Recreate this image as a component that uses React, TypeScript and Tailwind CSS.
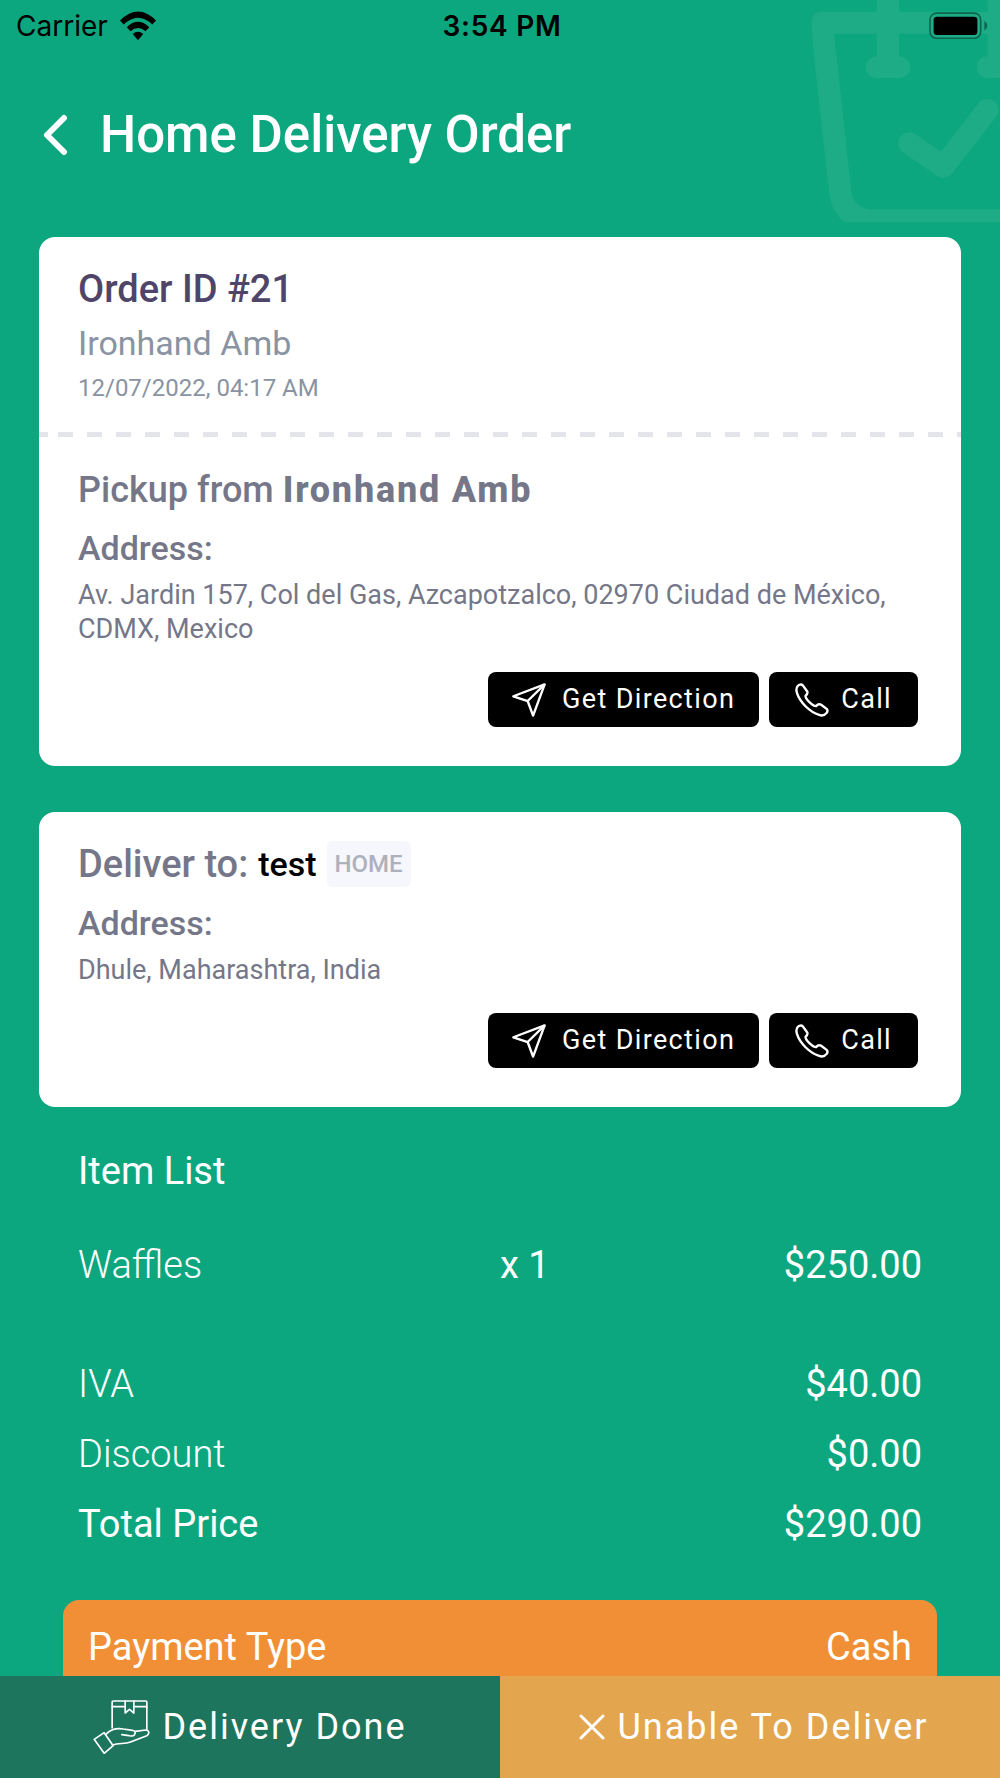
import { useState } from "react";

type Stop = {
  address: string;
};

const charges = [
  { label: "IVA", amount: "$40.00", strong: false },
  { label: "Discount", amount: "$0.00", strong: false },
  { label: "Total Price", amount: "$290.00", strong: true },
];

function WifiIcon() {
  return (
    <svg viewBox="0 0 96 80" className="h-[30px] w-9" aria-hidden="true">
      <path d="M0 25Q48-23 96 25L86 36Q48 0 10 36Z" />
      <path d="M18 43Q48 14 78 43L68 54Q48 36 28 54Z" />
      <path d="M34 61Q48 50 62 61L48 78Z" />
    </svg>
  );
}

function BatteryIcon() {
  return (
    <svg viewBox="0 0 178 84" className="h-7 w-[59px]" aria-hidden="true">
      <rect x="3" y="3" width="153" height="76" rx="20" fill="#1eac87" stroke="#0b6650" strokeWidth="5" />
      <rect x="14" y="14" width="132" height="55" rx="10" />
      <path d="M167 27Q176 32 176 41T167 56Z" fill="#0b6650" />
    </svg>
  );
}

function CalendarArt() {
  return (
    <svg
      viewBox="0 0 660 720"
      className="pointer-events-none absolute top-0 right-0 h-60 w-[220px]"
      fill="#1eac87"
      aria-hidden="true"
    >
      <path d="M95 66Q95 35 126 35H660V101H162L214 575Q224 624 270 628H660V667H195Q154 636 147 575L97 120Z" />
      <path d="M290 0H357V168Q390 172 390 201T357 234H290Q257 230 257 201T290 168Z" />
      <path d="M623 0H660V234H623Q590 230 590 201T623 168Z" />
      <path d="M388 430L490 500L622 330" fill="none" stroke="#1eac87" strokeWidth="66" strokeLinecap="round" strokeLinejoin="round" />
    </svg>
  );
}

function SendIcon() {
  return (
    <svg viewBox="0 0 100 100" className="size-[34px]" fill="none" stroke="currentColor" strokeWidth="7" strokeLinejoin="round" aria-hidden="true">
      <path d="M96 4L4 39L46 53L62 96Z" />
      <path d="M96 4L46 53" />
    </svg>
  );
}

function PhoneIcon() {
  return (
    <svg viewBox="0 0 100 100" className="size-[34px]" fill="none" stroke="currentColor" strokeWidth="7" strokeLinejoin="round" aria-hidden="true">
      <path d="M8 9C12 4 19 3 23 7L36 25C39 30 35 34 31 38C31 47 51 67 62 68C67 62 72 61 77 64L93 76C97 80 96 84 93 88C88 95 80 97 71 94C43 85 14 56 6 30C3 21 3 15 8 9Z" />
    </svg>
  );
}

function HandBoxIcon() {
  return (
    <svg viewBox="0 0 170 162" className="h-[54px] w-[57px]" fill="none" stroke="currentColor" strokeWidth="5" strokeLinejoin="round" strokeLinecap="round" aria-hidden="true">
      <path d="M57 84V6Q57 3 60 3H158Q161 3 161 6V90" />
      <path d="M57 20H96M122 20H161M96 3V39L109 28L122 39V3" />
      <path d="M3 118L33 98L60 137L33 160Z" />
      <path d="M38 103C55 86 74 84 90 87L118 91C126 92 128 98 124 104C120 110 113 108 107 107L86 104" />
      <path d="M126 94L158 90C168 90 170 102 161 107L112 126C94 134 78 127 58 135" />
    </svg>
  );
}

function StopDetails({ address }: Stop) {
  return (
    <>
      <h3 className="text-[34px] leading-[44px] font-medium">Address:</h3>
      <p className="mt-2 text-[27px] leading-[34px]">{address}</p>
      <div className="mt-[26px] flex justify-end gap-2.5 pr-1">
        <button className="flex h-[55px] items-center gap-4 rounded-lg bg-black px-6 text-[27px] tracking-wider text-white">
          <SendIcon />
          Get Direction
        </button>
        <button className="flex h-[55px] items-center gap-3 rounded-lg bg-black px-[26px] text-[27px] tracking-wider text-white">
          <PhoneIcon />
          Call
        </button>
      </div>
    </>
  );
}

export default function App() {
  const [status, setStatus] = useState<string>("pending");

  return (
    <div className="relative flex h-screen flex-col overflow-hidden bg-[#0da77f] font-['Roboto',sans-serif] text-white">
      <CalendarArt />

      {/* Status bar */}
      <div className="relative grid h-[51px] shrink-0 grid-cols-3 items-center pr-3 pl-4 font-['Inter',sans-serif] text-[28px] leading-8 text-black">
        <div className="flex items-center gap-3">
          <span>Carrier</span>
          <WifiIcon />
        </div>
        <span className="text-center font-semibold tracking-wide">3:54 PM</span>
        <div className="flex justify-end">
          <BatteryIcon />
        </div>
      </div>

      {/* Title */}
      <header className="relative mt-[52px] flex shrink-0 items-center px-[43px]">
        <button aria-label="Back" className="mr-8">
          <svg viewBox="0 0 25 42" className="h-[42px] w-[25px]" fill="none" stroke="currentColor" strokeWidth="6" strokeLinecap="round" strokeLinejoin="round">
            <path d="M21 4L4 21L21 38" />
          </svg>
        </button>
        <h1 className="text-[51px] leading-[64px] font-medium">Home Delivery Order</h1>
      </header>

      <main className="relative mt-[70px] min-h-0 flex-1 overflow-y-auto [scrollbar-width:none]">
        {/* Pickup card */}
        <section className="mx-[39px] rounded-2xl bg-white pt-7 pb-[39px] text-[#757789]">
          <div className="px-[39px]">
            <h2 className="text-[38px] leading-[48px] font-medium text-[#4f4569]">Order ID #21</h2>
            <p className="mt-2 text-[34px] leading-[44px] text-[#8a93a2]">Ironhand Amb</p>
            <p className="mt-[7px] text-[24px] leading-8 text-[#8a93a2]">12/07/2022, 04:17 AM</p>
          </div>

          <div className="mt-7 flex h-[5px] gap-2.5">
            <span className="w-[9px] bg-[#e3e5eb]" />
            <span className="flex-1 bg-[repeating-linear-gradient(90deg,#e3e5eb_0px_15px,transparent_15px_29px)]" />
          </div>

          <div className="px-[39px] pt-[29px]">
            <h2 className="mb-3 text-[36px] leading-[48px] font-medium">
              Pickup from <b className="font-extrabold tracking-wider">Ironhand Amb</b>
            </h2>
            <StopDetails address="Av. Jardin 157, Col del Gas, Azcapotzalco, 02970 Ciudad de México, CDMX, Mexico" />
          </div>
        </section>

        {/* Drop-off card */}
        <section className="mx-[39px] mt-[46px] rounded-2xl bg-white px-[39px] pt-[29px] pb-[39px] text-[#757789]">
          <div className="mb-3.5 flex items-center gap-2.5 leading-[46px] font-medium">
            <h2 className="text-[38px]">Deliver to:</h2>
            <span className="text-[34px] text-black">test</span>
            <span className="rounded-md bg-[#f6f6fd] px-2 text-[24px] text-[#adb1bb]">HOME</span>
          </div>
          <StopDetails address="Dhule, Maharashtra, India" />
        </section>

        {/* Items and totals */}
        <section className="mt-10 px-[78px] text-[38px] leading-[48px]">
          <h2>Item List</h2>
          <div className="mt-[46px] grid grid-cols-2">
            <span className="font-light">Waffles</span>
            <div className="flex justify-between">
              <span>x 1</span>
              <span>$250.00</span>
            </div>
          </div>
          <dl className="mt-[71px] space-y-[22px]">
            {charges.map((row) => (
              <div key={row.label} className="flex justify-between">
                <dt className={row.strong ? "font-normal" : "font-light"}>{row.label}</dt>
                <dd>{row.amount}</dd>
              </div>
            ))}
          </dl>
        </section>

        <section className="mx-[63px] mt-[52px] flex justify-between rounded-2xl bg-[#f18f37] px-[25px] py-[23px] text-[38px] leading-[48px]">
          <span>Payment Type</span>
          <span>Cash</span>
        </section>
      </main>

      <footer className="relative grid h-[102px] shrink-0 grid-cols-2 text-[36px]">
        <button
          onClick={() => setStatus("done")}
          aria-pressed={status === "done"}
          className="flex items-center justify-center gap-3 bg-[#1d755e] tracking-[2px]"
        >
          <HandBoxIcon />
          Delivery Done
        </button>
        <button
          onClick={() => setStatus("failed")}
          aria-pressed={status === "failed"}
          className="flex items-center justify-center gap-3 bg-[#e3a54d] pl-2 tracking-[2px]"
        >
          <svg viewBox="0 0 26 26" className="size-[26px]" stroke="currentColor" strokeWidth="3" strokeLinecap="round" aria-hidden="true">
            <path d="M2 2L24 24M24 2L2 24" />
          </svg>
          Unable To Deliver
        </button>
      </footer>
    </div>
  );
}
